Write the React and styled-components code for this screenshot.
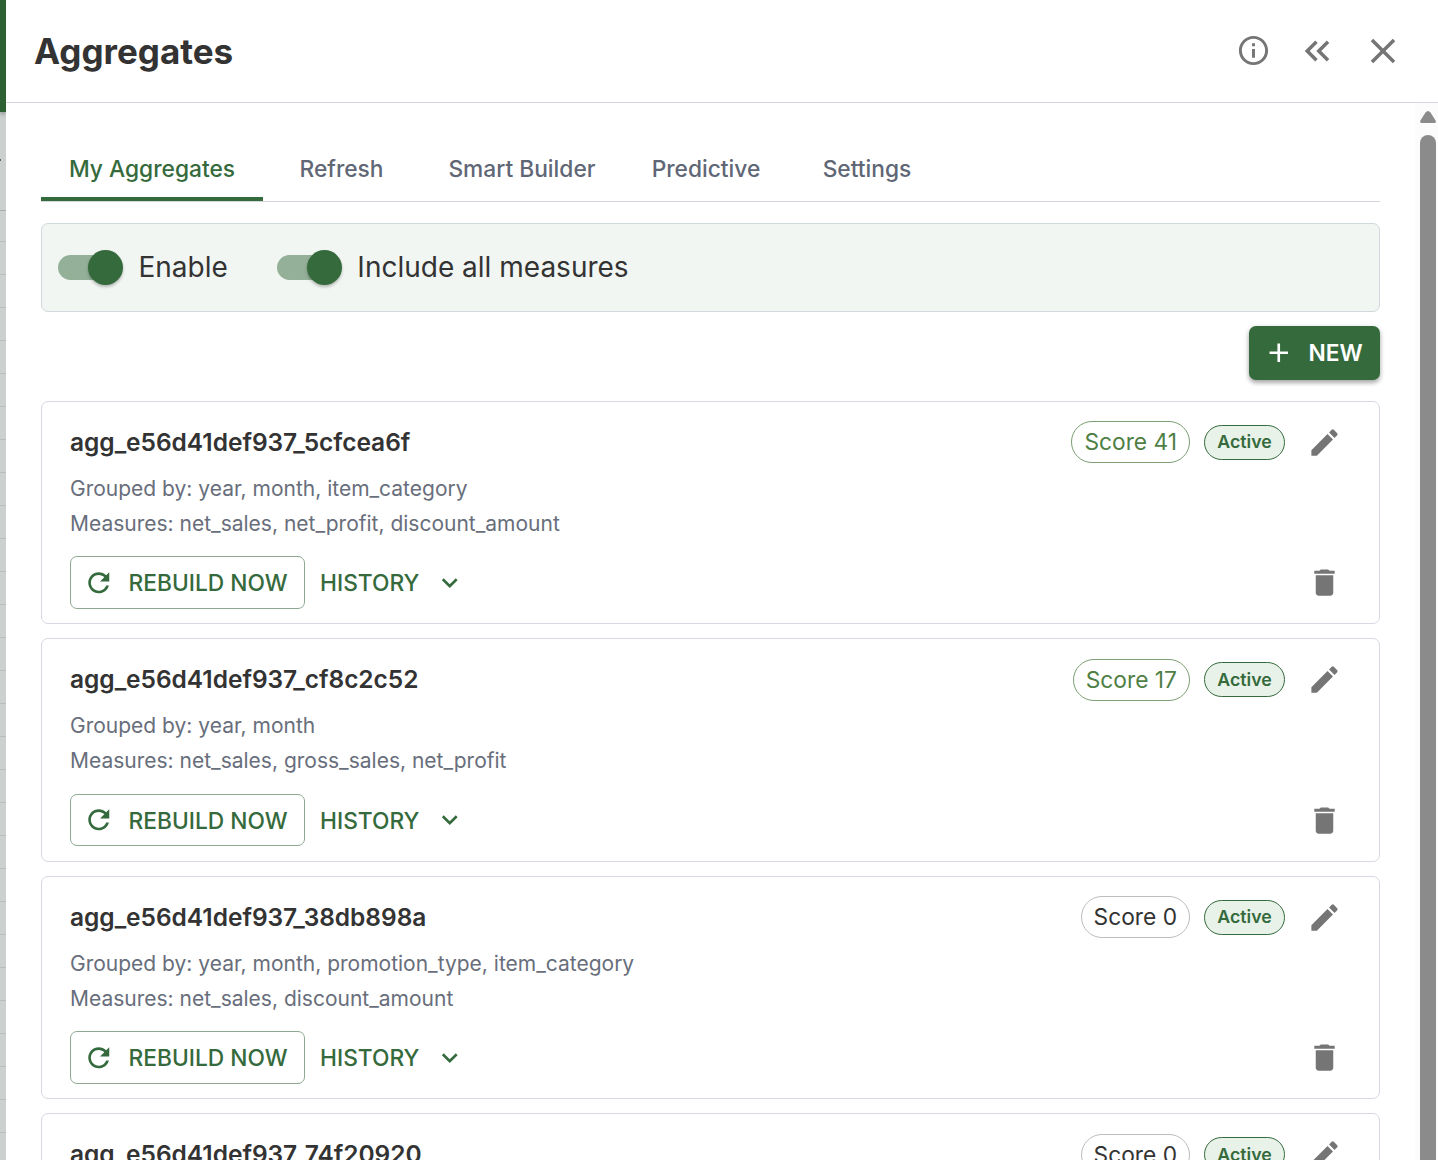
import React from 'react';
import styled, { createGlobalStyle } from 'styled-components';

const GlobalStyle = createGlobalStyle`
* {
    box-sizing: border-box;
}
body {
    margin: 0;
    overflow: hidden;
    background-color: white;
    font-family: Inter, "Liberation Sans", sans-serif;
    color: #333333;
}
button {
    font-family: inherit;
    cursor: pointer;
}
`
const Page = styled.div`
display: flex;
height: 1160px;
overflow: hidden;
`
const Backdrop = styled.div`
width: 6px;
flex-shrink: 0;
display: flex;
flex-direction: column;
background-color: #ccd0ce;
`
const BackdropBar = styled.div`
height: 112px;
flex-shrink: 0;
background-color: #2d6033;
box-shadow: 0 2px 4px rgba(0, 0, 0, 0.3);
`
const BackdropHead = styled.div`
height: 99px;
flex-shrink: 0;
padding-top: 47px;
border-bottom: 1px solid #a9acab;
`
const BackdropMark = styled.div`
width: 1px;
height: 2px;
background-color: #5c5f5e;
`
const BackdropRows = styled.div`
flex: 1;
margin-top: -2px;
background: repeating-linear-gradient(to bottom, transparent 0 32px, #bcbfbe 32px 33px);
`
const Drawer = styled.div`
flex: 1;
min-width: 0;
display: flex;
flex-direction: column;
background-color: white;
`
const Header = styled.div`
height: 103px;
flex-shrink: 0;
display: flex;
align-items: center;
justify-content: space-between;
padding: 0 34px 0 28px;
border-bottom: 1px solid #d3d5df;
`
const Title = styled.h1`
margin: 0;
font-size: 35px;
font-weight: 700;
line-height: 44px;
white-space: nowrap;
`
const HeaderActions = styled.div`
display: flex;
align-items: center;
gap: 24.5px;
margin-top: -1px;
`
const IconButton = styled.button`
display: flex;
align-items: center;
justify-content: center;
padding: 0;
border: none;
background: none;
color: #757575;
`
const Body = styled.div`
flex: 1;
min-height: 0;
display: flex;
`
const Content = styled.div`
flex: 1;
min-width: 0;
padding: 33px 35px 0;
overflow: hidden;
`
const ScrollBar = styled.div`
width: 23px;
flex-shrink: 0;
display: flex;
flex-direction: column;
align-items: center;
padding: 8px 0 0 3px;
background-color: #fcfcfc;
`
const ScrollThumb = styled.div`
width: 16px;
flex: 1;
margin-top: 12px;
border-radius: 8px 8px 0 0;
background-color: #8b8b8b;
`
const Tabs = styled.div`
display: flex;
height: 66px;
border-bottom: 1px solid #d3d5df;
`
const Tab = styled.button`
height: 65px;
width: ${props => props.$width}px;
padding: 4px 0 0;
border: none;
border-bottom: 4px solid ${props => props.$active ? '#356a3c' : 'transparent'};
background: none;
color: ${props => props.$active ? '#356a3c' : '#5f6776'};
font-size: 22.75px;
font-weight: 500;
line-height: 28px;
white-space: nowrap;
`
const Options = styled.div`
display: flex;
align-items: center;
gap: 49px;
height: 89px;
margin-top: 21px;
padding: 0 16px;
border: 1px solid #d1d9dc;
border-radius: 7px;
background-color: #f1f6f3;
`
const Option = styled.label`
display: flex;
align-items: center;
gap: 15.5px;
font-size: 28px;
line-height: 35px;
white-space: nowrap;
`
const SwitchTrack = styled.span`
display: flex;
align-items: center;
justify-content: flex-end;
width: 65px;
height: 25px;
border-radius: 13px;
background: linear-gradient(to right, #94b098 50px, transparent 50px);
`
const SwitchThumb = styled.span`
width: 35px;
height: 35px;
flex-shrink: 0;
border-radius: 50%;
background-color: #356a3c;
box-shadow: 0 2px 3px rgba(0, 0, 0, 0.25);
`
const Toolbar = styled.div`
display: flex;
justify-content: flex-end;
margin: 14px 0 20.75px;
`
const NewButton = styled.button`
display: flex;
align-items: center;
gap: 14px;
width: 131px;
height: 54px;
padding: 0 14px 1px;
border: none;
border-radius: 7px;
background-color: #356a3c;
box-shadow: 0 3px 4px rgba(0, 0, 0, 0.28), 0 1px 6px rgba(0, 0, 0, 0.12);
color: white;
font-size: 22.75px;
font-weight: 600;
`
const List = styled.div`
display: flex;
flex-direction: column;
gap: 14px;
`
const Card = styled.div`
height: 223.5px;
flex-shrink: 0;
padding: 19px 37px 0 28px;
border: 1px solid #d6d8e2;
border-radius: 7px;
background-color: white;
`
const CardRow = styled.div`
display: flex;
align-items: center;
justify-content: space-between;
height: ${props => props.$height}px;
`
const Name = styled.h2`
margin: 0 0 0.7px;
font-size: 24.5px;
font-weight: 600;
line-height: 32px;
letter-spacing: -0.03px;
white-space: nowrap;
`
const Badges = styled.div`
display: flex;
align-items: center;
`
const Score = styled.span`
display: flex;
align-items: center;
height: 42px;
padding: 0 12px 1px;
border: 1px solid ${props => props.$good ? '#7c9f73' : '#bdbdbd'};
border-radius: 21px;
color: ${props => props.$good ? '#4f7f45' : '#333333'};
font-size: 22.75px;
white-space: nowrap;
`
const Status = styled.span`
display: flex;
align-items: center;
justify-content: center;
width: 81px;
height: 35px;
margin: 0 22px 0 14px;
padding-bottom: 1px;
border: 1px solid #356a3c;
border-radius: 18px;
background-color: #e8f2e9;
color: #356a3c;
font-size: 17.75px;
font-weight: 600;
`
const Details = styled.div`
margin-top: 7px;
color: #686e7b;
font-size: 21px;
line-height: 35px;
white-space: nowrap;
`
const Actions = styled.div`
display: flex;
align-items: center;
gap: 15px;
`
const RebuildButton = styled.button`
display: flex;
align-items: center;
gap: 14px;
width: 235px;
height: 52.5px;
padding: 0 12px;
border: 1px solid #8fa892;
border-radius: 7px;
background-color: white;
color: #356a3c;
font-size: 22.75px;
font-weight: 500;
white-space: nowrap;
`
const HistoryButton = styled.button`
display: flex;
align-items: center;
gap: 14.5px;
padding: 0;
border: none;
background: none;
color: #356a3c;
font-size: 22.75px;
font-weight: 500;
white-space: nowrap;
`

const icons = {
    info: 'M11 7h2v2h-2zm0 4h2v6h-2zm1-9C6.48 2 2 6.48 2 12s4.48 10 10 10 10-4.48 10-10S17.52 2 12 2m0 18c-4.41 0-8-3.59-8-8s3.59-8 8-8 8 3.59 8 8-3.59 8-8 8',
    collapse: 'M17.59 18 19 16.59 14.42 12 19 7.41 17.59 6l-6 6zM11 18l1.41-1.41L7.83 12l4.58-4.59L11 6l-6 6z',
    close: 'M19 6.41 17.59 5 12 10.59 6.41 5 5 6.41 10.59 12 5 17.59 6.41 19 12 13.41 17.59 19 19 17.59 13.41 12z',
    add: 'M19 13h-6v6h-2v-6H5v-2h6V5h2v6h6z',
    edit: 'M3 17.25V21h3.75L17.81 9.94l-3.75-3.75zM20.71 7.04c.39-.39.39-1.02 0-1.41l-2.34-2.34a.996.996 0 0 0-1.41 0l-1.83 1.83 3.75 3.75z',
    remove: 'M6 19c0 1.1.9 2 2 2h8c1.1 0 2-.9 2-2V7H6zM19 4h-3.5l-1-1h-5l-1 1H5v2h14z',
    refresh: 'M17.65 6.35C16.2 4.9 14.21 4 12 4c-4.42 0-7.99 3.58-7.99 8s3.57 8 7.99 8c3.73 0 6.84-2.55 7.73-6h-2.08c-.82 2.33-3.04 4-5.65 4-3.31 0-6-2.69-6-6s2.69-6 6-6c1.66 0 3.14.69 4.22 1.78L13 11h7V4z',
    expand: 'M16.59 8.59 12 13.17 7.41 8.59 6 10l6 6 6-6z'
}

const Icon = ({ name, size }) => (
    <svg width={size} height={size} viewBox="0 0 24 24" fill="currentColor" style={{ flexShrink: 0 }}>
        <path d={icons[name]} />
    </svg>
)

const tabs = [
    { label: 'My Aggregates', width: 222 },
    { label: 'Refresh', width: 157 },
    { label: 'Smart Builder', width: 204 },
    { label: 'Predictive', width: 164 },
    { label: 'Settings', width: 158 }
]

const aggregates = [
    { name: 'agg_e56d41def937_5cfcea6f', score: 41, groups: 'year, month, item_category', measures: 'net_sales, net_profit, discount_amount' },
    { name: 'agg_e56d41def937_cf8c2c52', score: 17, groups: 'year, month', measures: 'net_sales, gross_sales, net_profit' },
    { name: 'agg_e56d41def937_38db898a', score: 0, groups: 'year, month, promotion_type, item_category', measures: 'net_sales, discount_amount' },
    { name: 'agg_e56d41def937_74f20920', score: 0, groups: '', measures: '' }
]

const AggregateCard = ({ item }) => (
    <Card>
        <CardRow $height={43}>
            <Name>{item.name}</Name>
            <Badges>
                <Score $good={item.score > 0}>Score {item.score}</Score>
                <Status>Active</Status>
                <IconButton aria-label="Edit"><Icon name="edit" size={35} /></IconButton>
            </Badges>
        </CardRow>
        {item.groups && <Details>
            <div>Grouped by: {item.groups}</div>
            <div>Measures: {item.measures}</div>
        </Details>}
        {item.groups && <CardRow $height={83.5}>
            <Actions>
                <RebuildButton><Icon name="refresh" size={31.5} />REBUILD NOW</RebuildButton>
                <HistoryButton>HISTORY<Icon name="expand" size={31.5} /></HistoryButton>
            </Actions>
            <IconButton aria-label="Delete"><Icon name="remove" size={35} /></IconButton>
        </CardRow>}
    </Card>
)

export default class App extends React.Component {
    state = {
        activeTab: 'My Aggregates'
    }

    render() {
        const tabList = tabs.map((tab) => {
            return <Tab
                key={tab.label}
                $width={tab.width}
                $active={tab.label === this.state.activeTab}
                onClick={() => this.setState({ activeTab: tab.label })}
            >
                {tab.label}
            </Tab>
        })
        return <Page>
            <GlobalStyle />
            <Backdrop>
                <BackdropBar />
                <BackdropHead><BackdropMark /></BackdropHead>
                <BackdropRows />
            </Backdrop>
            <Drawer>
                <Header>
                    <Title>Aggregates</Title>
                    <HeaderActions>
                        <IconButton aria-label="Info"><Icon name="info" size={35} /></IconButton>
                        <IconButton aria-label="Collapse"><Icon name="collapse" size={42} /></IconButton>
                        <IconButton aria-label="Close"><Icon name="close" size={42} /></IconButton>
                    </HeaderActions>
                </Header>
                <Body>
                    <Content>
                        <Tabs>{tabList}</Tabs>
                        <Options>
                            <Option><SwitchTrack><SwitchThumb /></SwitchTrack>Enable</Option>
                            <Option><SwitchTrack><SwitchThumb /></SwitchTrack>Include all measures</Option>
                        </Options>
                        <Toolbar>
                            <NewButton><Icon name="add" size={31.5} />NEW</NewButton>
                        </Toolbar>
                        <List>
                            {aggregates.map((item) => <AggregateCard key={item.name} item={item} />)}
                        </List>
                    </Content>
                    <ScrollBar>
                        <svg width="16" height="12" viewBox="0 0 16 12" fill="#8b8b8b">
                            <path d="M5.5 1.5Q8-1.500 10.500 1.500L15.600 9.500Q16.400 12 14.500 12H1.500Q-.4 12 .4 9.500Z" />
                        </svg>
                        <ScrollThumb />
                    </ScrollBar>
                </Body>
            </Drawer>
        </Page>
    }
}
